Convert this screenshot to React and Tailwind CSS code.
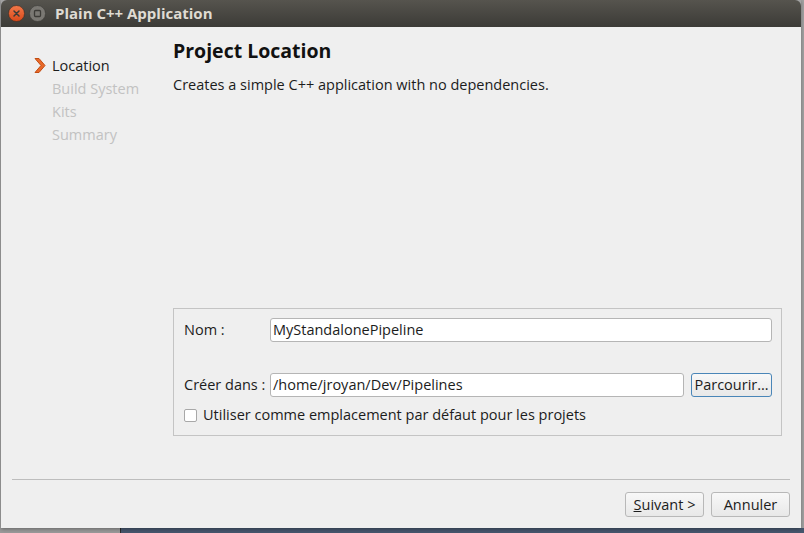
import React from 'react';

const font = { fontFamily: '"Open Sans", "Noto Sans", sans-serif' };

function Chevron() {
    return (
        <svg width="12" height="15" viewBox="0 0 12 15" className="shrink-0">
            <polygon points="1,0.5 5,0.5 11,7.5 5,14.5 1,14.5 7,7.5" fill="#e8692a" stroke="#c14c12" strokeWidth="1" strokeLinejoin="round" />
        </svg>
    );
}

function TitleButtons() {
    return (
        <div className="flex items-center gap-[4px] pl-[7px]">
            <svg width="17" height="17" viewBox="0 0 17 17">
                <defs>
                    <linearGradient id="cl" x1="0" y1="0" x2="0" y2="1">
                        <stop offset="0" stopColor="#f3794a" />
                        <stop offset="1" stopColor="#d8491a" />
                    </linearGradient>
                </defs>
                <circle cx="8.5" cy="8.5" r="8" fill="url(#cl)" stroke="#3a2a22" strokeWidth="0.6" />
                <path d="M6 6 L11 11 M11 6 L6 11" stroke="#3c3b37" strokeWidth="1.5" strokeLinecap="round" />
            </svg>
            <svg width="17" height="17" viewBox="0 0 17 17">
                <circle cx="8.5" cy="8.5" r="8" fill="#7a7873" stroke="#3a3935" strokeWidth="0.6" />
                <rect x="5.5" y="5.5" width="6" height="6" rx="1" fill="none" stroke="#3c3b37" strokeWidth="1.3" />
            </svg>
        </div>
    );
}

export default function App() {
    const steps = ['Build System', 'Kits', 'Summary'];
    const btn = 'h-[25px] flex items-center justify-center border rounded-[3px] bg-gradient-to-b from-[#f8f8f8] to-[#e8e8e8]';

    return (
        <div className="relative w-[804px] h-[533px] overflow-hidden bg-[#a3a3a3]" style={font}>
            {/* desktop behind the dialog */}
            <div className="absolute left-0 bottom-0 w-full h-[5px] flex">
                <div className="w-[120px] bg-[#9a9a9a]" />
                <div className="w-[1px] bg-[#2b2b2b]" />
                <div className="flex-1 bg-[#46566d]" />
            </div>

            {/* dialog window */}
            <div className="absolute left-[1px] top-0 w-[800px] h-[528px] flex flex-col shadow-[0_1px_4px_rgba(0,0,0,0.35)]">
                <div className="h-[27px] shrink-0 flex items-center rounded-t-[6px] bg-gradient-to-b from-[#56544e] to-[#3c3b37]">
                    <TitleButtons />
                    <span className="ml-[9px] text-[15px] font-bold text-[#dfdbd2]">Plain C++ Application</span>
                </div>

                <div className="flex-1 flex flex-col bg-[#efefef] text-[#1c1c1c] text-[14.5px]">
                    <div className="flex-1 flex">
                        {/* wizard steps */}
                        <div className="w-[172px] shrink-0 pt-[27px] pl-[33px] leading-[23px]">
                            <div className="flex items-center gap-[6px]">
                                <Chevron />
                                <span>Location</span>
                            </div>
                            {steps.map((s) => (
                                <div key={s} className="pl-[18px] text-[#c2c2c2]">{s}</div>
                            ))}
                        </div>

                        {/* page */}
                        <div className="flex-1 flex flex-col pt-[12px] pr-[19px]">
                            <h1 className="text-[19.5px] font-bold leading-[24px] text-[#111]">Project Location</h1>
                            <p className="mt-[12px] leading-[20px]">Creates a simple C++ application with no dependencies.</p>

                            <div className="mt-auto border border-[#c4c4c4] pt-[9px] pb-[11px] pl-[10px] pr-[9px]">
                                <div className="grid grid-cols-[86px_1fr] items-center">
                                    <span>Nom :</span>
                                    <div className="h-[24px] flex items-center px-[2px] bg-white border border-[#b5b5b5] rounded-[3px]">MyStandalonePipeline</div>
                                </div>
                                <div className="mt-[31px] grid grid-cols-[86px_1fr] items-center">
                                    <span>Créer dans :</span>
                                    <div className="flex gap-[7px]">
                                        <div className="flex-1 h-[24px] flex items-center px-[2px] bg-white border border-[#b5b5b5] rounded-[3px]">/home/jroyan/Dev/Pipelines</div>
                                        <button className={`${btn} w-[81px] !h-[24px] border-[#4a86b8] whitespace-nowrap`}>Parcourir…</button>
                                    </div>
                                </div>
                                <div className="mt-[9px] h-[18px] flex items-center gap-[6px] leading-[18px]">
                                    <div className="w-[13px] h-[13px] bg-white border border-[#a8a8a8] rounded-[2px]" />
                                    <span>Utiliser comme emplacement par défaut pour les projets</span>
                                </div>
                            </div>
                        </div>
                    </div>

                    <div className="mt-[43px] mx-[11px] h-[1px] bg-[#bdbdbd]" />

                    <div className="flex justify-end gap-[7px] pt-[12px] pb-[11px] pr-[11px]">
                        <button className={`${btn} w-[79px] border-[#b8b8b8]`}>
                            <span><span className="underline">S</span>uivant &gt;</span>
                        </button>
                        <button className={`${btn} w-[79px] border-[#b8b8b8]`}>Annuler</button>
                    </div>
                </div>
            </div>
        </div>
    );
}
